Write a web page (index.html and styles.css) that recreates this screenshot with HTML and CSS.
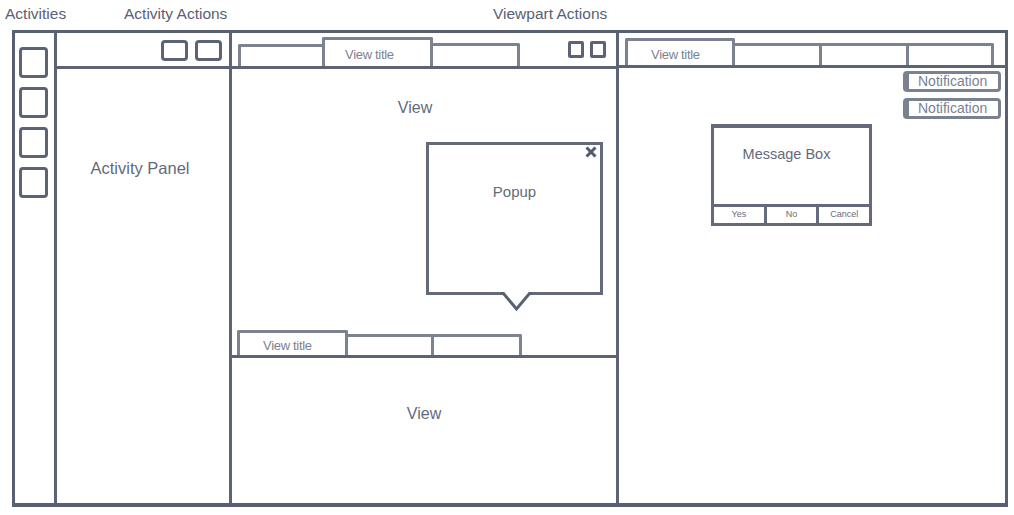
FILE: index.html
```html
<!DOCTYPE html>
<html>
<head>
<meta charset="utf-8">
<link rel="stylesheet" href="styles.css">
</head>
<body>
<div class="labels">
  <span class="l-act">Activities</span>
  <span class="l-aa">Activity Actions</span>
  <span class="l-vp">Viewpart Actions</span>
</div>
<div class="frame">
  <div class="activitybar">
    <div class="act-icon"></div>
    <div class="act-icon"></div>
    <div class="act-icon"></div>
    <div class="act-icon"></div>
  </div>
  <div class="panel">
    <div class="panel-head">
      <div class="abtn"></div>
      <div class="abtn"></div>
    </div>
    <div class="panel-body">Activity Panel</div>
  </div>
  <div class="group g1">
    <div class="editor top">
      <div class="tabbar">
        <div class="tab t1a"></div>
        <div class="tab active t1b">View title</div>
        <div class="tab t1c"></div>
        <div class="vbtns">
          <div class="vbtn"></div>
          <div class="vbtn"></div>
        </div>
      </div>
      <div class="view view-top">View
        <div class="popup">
          <svg class="close" width="12" height="12" viewBox="0 0 12 12"><path d="M1.5 1.5L10.5 10.5M10.5 1.5L1.5 10.5" stroke="#525a6c" stroke-width="3" fill="none"/></svg>
          <div class="popup-text">Popup</div>
          <svg class="arrow" width="42" height="30" viewBox="0 0 42 30"><rect x="8" y="3" width="26" height="6" fill="#fff"/><polyline points="5,6.5 7.5,6.5 20.5,22 33.5,6.5 36,6.5" fill="none" stroke="#586072" stroke-width="3"/></svg>
        </div>
      </div>
    </div>
    <div class="editor bottom">
      <div class="tabbar low">
        <div class="tab active t2a">View title</div>
        <div class="tab t2b"></div>
        <div class="tab t2c"></div>
      </div>
      <div class="view view-bottom">View</div>
    </div>
  </div>
  <div class="group g2">
    <div class="tabbar r">
      <div class="tab active t3a">View title</div>
      <div class="tab t3b"></div>
      <div class="tab t3c"></div>
      <div class="tab t3d"></div>
    </div>
    <div class="view view-right">
      <div class="toasts">
        <div class="toast">Notification</div>
        <div class="toast">Notification</div>
      </div>
      <div class="msgbox">
        <div class="msg-body">Message Box</div>
        <div class="msg-btns">
          <div class="mbtn">Yes</div>
          <div class="mbtn">No</div>
          <div class="mbtn">Cancel</div>
        </div>
      </div>
    </div>
  </div>
</div>
</body>
</html>
```
FILE: styles.css
```css
* { box-sizing: border-box; margin: 0; padding: 0; }
body {
  background: #fff;
  font-family: "Liberation Sans", Arial, sans-serif;
  color: #5c6375;
  width: 1014px;
  height: 515px;
  overflow: hidden;
}
.labels {
  display: flex;
  height: 30px;
  font-size: 15.5px;
  line-height: 27px;
  color: #5a6173;
}
.l-act { width: 124px; padding-left: 5px; }
.l-aa { width: 369px; }
.frame {
  margin-left: 12px;
  width: 996px;
  height: 477px;
  border: 3px solid #586072;
  border-bottom-width: 4px;
  display: flex;
  color: #5c6375;
}
.frame * { border-color: #586072; }
.activitybar {
  width: 42px;
  border-right: 3px solid;
  display: flex;
  flex-direction: column;
  gap: 9px;
  padding: 14px 0 0 4px;
}
.act-icon {
  width: 29px;
  height: 31px;
  border: 3px solid;
  border-radius: 4px;
}
.panel {
  width: 175px;
  border-right: 3px solid;
  display: flex;
  flex-direction: column;
}
.panel-head {
  height: 36px;
  border-bottom: 3px solid;
  display: flex;
  justify-content: flex-end;
  gap: 7px;
  padding: 7px 7px 0 0;
}
.abtn {
  width: 27px;
  height: 21px;
  border: 3px solid;
  border-radius: 4px;
}
.panel-body {
  padding: 89px 6px 0 0;
  text-align: center;
  font-size: 16.5px;
  line-height: 20px;
  color: #646a7a;
}
.group { display: flex; flex-direction: column; }
.g1 { width: 387px; border-right: 3px solid; }
.g2 { flex: 1; }
.editor { display: flex; flex-direction: column; }
.editor.top { flex: 1; }
.editor.bottom { height: 176px; }
.tabbar {
  display: flex;
  align-items: flex-end;
  border-bottom: 3px solid;
  height: 36px;
  padding-left: 6px;
}
.tabbar.low { height: 31px; padding-left: 5px; }
.tabbar.r { height: 35px; padding-left: 6px; }
.tab {
  border: 3px solid;
  border-bottom: none;
  border-radius: 2px 2px 0 0;
  margin-left: -3px;
  font-size: 13px;
  color: #7d8290;
  letter-spacing: -0.3px;
}
.tab:first-child { margin-left: 0; }
.tab.active { padding-left: 20px; }
.t1a { width: 87px; height: 22px; }
.t1b { width: 111px; height: 29px; line-height: 29px; }
.t1c { width: 90px; height: 23px; }
.t2a { width: 111px; height: 25px; line-height: 26px; padding-left: 23px !important; }
.t2b { width: 89px; height: 21px; }
.t2c { width: 91px; height: 21px; }
.t3a { width: 110px; height: 27px; line-height: 27px; padding-left: 23px !important; }
.t3b { width: 90px; height: 22px; }
.t3c { width: 90px; height: 22px; }
.t3d { width: 88px; height: 22px; }
.vbtns {
  margin-left: auto;
  align-self: flex-start;
  margin-top: 8px;
  display: flex;
  gap: 6px;
  padding-right: 10px;
}
.vbtn {
  width: 16px;
  height: 17px;
  border: 3px solid;
  border-radius: 2px;
}
.view {
  position: relative;
  text-align: center;
  font-size: 16px;
  line-height: 20px;
  color: #646a7a;
}
.view-top { flex: 1; padding: 29px 18px 0 0; }
.view-bottom { flex: 1; padding-top: 46px; }
.view-right { flex: 1; }
.popup {
  position: absolute;
  left: 194px;
  top: 73px;
  width: 177px;
  height: 153px;
  border: 3px solid;
  background: #fff;
}
.popup-text {
  padding-top: 38px;
  font-size: 15px;
  line-height: 18px;
  text-align: center;
}
.close { position: absolute; left: 156px; top: 1px; }
.arrow { position: absolute; left: 67px; top: 142px; }
.toasts {
  position: absolute;
  right: 4px;
  top: 3px;
  display: flex;
  flex-direction: column;
  gap: 6px;
}
.toast {
  width: 98px;
  height: 21px;
  border: 3px solid;
  border-left-width: 6px;
  border-radius: 4px;
  font-size: 14px;
  line-height: 15px;
  padding-left: 9px;
  text-align: left;
  color: #7a8190;
}
.msgbox {
  position: absolute;
  left: 92px;
  top: 56px;
  width: 161px;
  height: 102px;
  border: 3px solid;
  border-top-width: 4px;
  display: flex;
  flex-direction: column;
  background: #fff;
}
.msg-body {
  flex: 1;
  padding: 17px 10px 0 0;
  font-size: 14.5px;
  line-height: 18px;
  text-align: center;
}
.msg-btns {
  height: 19px;
  border-top: 3px solid;
  display: flex;
}
.mbtn {
  flex: 1;
  font-size: 9px;
  line-height: 15px;
  text-align: center;
  color: #666c7b;
  border-right: 3px solid;
}
.mbtn:last-child { border-right: none; }
```
